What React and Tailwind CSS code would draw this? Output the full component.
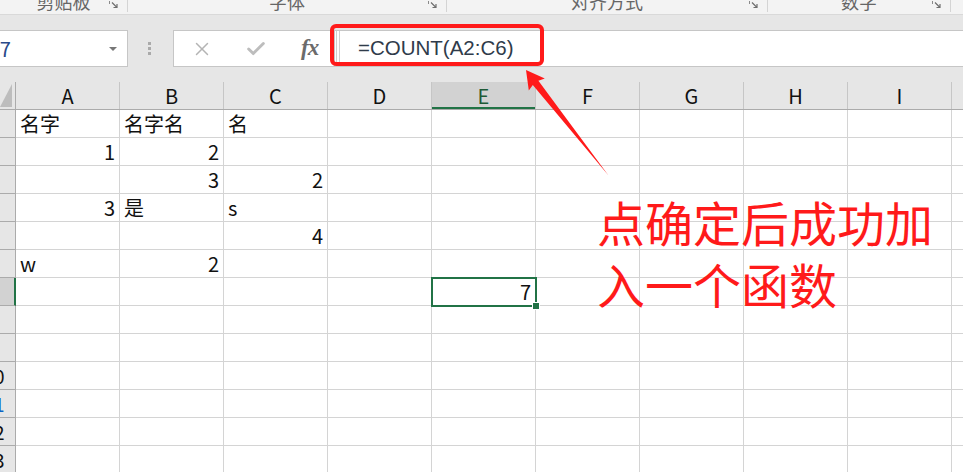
import { X, Check } from 'lucide-react';

const cols = ['A', 'B', 'C', 'D', 'E', 'F', 'G', 'H', 'I', 'J'];

// row -> column -> [value, isNumber]
const cells = {
  1: { A: ['名字'], B: ['名字名'], C: ['名'] },
  2: { A: ['1', true], B: ['2', true] },
  3: { B: ['3', true], C: ['2', true] },
  4: { A: ['3', true], B: ['是'], C: ['s'] },
  5: { C: ['4', true] },
  6: { A: ['w'], B: ['2', true] },
  7: { E: ['7', true] },
};

const groups = [
  { label: '剪贴板', w: 'w-[128px]' },
  { label: '字体', w: 'w-[319px]' },
  { label: '对齐方式', w: 'w-[321px]' },
  { label: '数字', w: 'w-[183px]' },
];

const Launcher = () => (
  <svg width="9" height="8" viewBox="0 0 9 8" className="absolute right-[9px] top-[1px]">
    <path d="M0.5 0 V3" stroke="#8a8a8a" strokeWidth="1" />
    <path d="M3 1.5 L7.5 6 M4.5 6.5 H8 V3" stroke="#6f6f6f" strokeWidth="1.2" fill="none" />
  </svg>
);

const Cell = ({ row, col }) => {
  const c = cells[row]?.[col];
  const selected = row === 7 && col === 'E';
  return (
    <div className="relative w-[104px] shrink-0 border-r border-b border-[#d4d4d4] flex items-end px-[4px] pb-[1px]">
      {c && (
        <span className={`w-full leading-[24px] ${c[1] ? 'text-right' : 'text-left'}`}>{c[0]}</span>
      )}
      {selected && (
        <>
          <div className="absolute z-10 -left-px -top-px w-[106px] h-[30px] border-2 border-[#217346]" />
          <div className="absolute z-20 -right-[5px] -bottom-[5px] w-[8px] h-[8px] bg-[#217346] border border-white" />
        </>
      )}
    </div>
  );
};

export default function App() {
  const rows = Array.from({ length: 13 }, (_, i) => i + 1);

  return (
    <div className="relative w-[963px] h-[472px] overflow-hidden bg-white text-[#111] font-['Noto_Sans_CJK_SC','Noto_Sans',sans-serif]">
      {/* Ribbon group labels */}
      <div className="flex h-[15px] bg-[#f3f3f3] border-b border-[#d9d9d9] overflow-hidden">
        {groups.map((g) => (
          <div key={g.label} className={`relative ${g.w} shrink-0 border-r border-[#d4d4d4] mb-[2px]`}>
            <div className="text-center text-[18px] leading-[18px] -mt-[8px] text-[#666]">{g.label}</div>
            <Launcher />
          </div>
        ))}
        <div className="flex-1" />
      </div>

      <div className="h-[15px] bg-[#e6e6e6]" />

      {/* Formula bar */}
      <div className="flex h-[37px] bg-[#e6e6e6]">
        <div className="w-[129px] -ml-px shrink-0 bg-white border border-[#c6c6c6] flex items-center justify-between pr-[10px]">
          <span className="-ml-[12px] text-[20px] text-[#2a4a8a]">E7</span>
          <span className="w-0 h-0 border-l-[4px] border-r-[4px] border-t-[4px] border-l-transparent border-r-transparent border-t-[#777]" />
        </div>
        <div className="w-[45px] shrink-0 flex justify-center items-center">
          <div className="flex flex-col gap-[2px] -ml-[2px]">
            <span className="w-[3px] h-[3px] bg-[#aaa]" />
            <span className="w-[3px] h-[3px] bg-[#aaa]" />
            <span className="w-[3px] h-[3px] bg-[#aaa]" />
          </div>
        </div>
        <div className="w-[162px] shrink-0 bg-white border border-[#c6c6c6] flex items-center">
          <X className="ml-[17px] w-[22px] h-[22px] text-[#b4b4b4]" strokeWidth={1.6} />
          <Check className="ml-[32px] w-[22px] h-[22px] text-[#bdbdbd]" strokeWidth={3.2} />
          <span className="ml-[34px] font-['Liberation_Serif',serif] italic font-bold text-[23px] text-[#6b6b6b] tracking-[-1px]">fx</span>
        </div>
        <div className="flex-1 bg-white border-y border-[#c6c6c6] flex items-center">
          <span className="ml-[1px] h-full w-[4px] border-x border-[#d0d0d0]" />
          <span className="ml-[18px] text-[20.5px] text-[#2f3b4a] font-['Liberation_Sans',Arial,sans-serif]">=COUNT(A2:C6)</span>
        </div>
      </div>

      <div className="h-[15px] bg-[#e6e6e6]" />

      {/* Column headers */}
      <div className="flex h-[28px] bg-[#e6e6e6] border-b border-[#ababab]">
        <div className="relative w-[16px] shrink-0 border-r border-[#ababab]">
          <svg width="13" height="23" viewBox="0 0 13 23" className="absolute right-[2px] bottom-[2px]">
            <polygon points="12,0 12,23 0,23" fill="#bdbdbd" />
          </svg>
        </div>
        {cols.map((c) => (
          <div
            key={c}
            className={`w-[104px] shrink-0 flex items-center justify-center text-[20px] border-r ${
              c === 'E'
                ? 'bg-[#d2d2d2] text-[#1e5a36] border-[#c6c6c6] shadow-[inset_0_-2px_0_#217346]'
                : 'border-[#c6c6c6] text-[#111]'
            }`}
          >
            {c}
          </div>
        ))}
      </div>

      {/* Rows */}
      {rows.map((r) => (
        <div key={r} className="flex h-[28px] text-[20px]">
          <div
            className={`w-[16px] shrink-0 overflow-hidden border-b border-b-[#ababab] ${
              r === 7 ? 'bg-[#d2d2d2] border-r-2 border-r-[#217346]' : 'bg-[#e6e6e6] border-r border-r-[#ababab]'
            }`}
          >
            <div
              className={`w-[42px] -ml-[27px] text-center leading-[27px] text-[19px] ${r === 11 ? 'text-[#0b63c5]' : 'text-[#111]'}`}
            >
              {r}
            </div>
          </div>
          {cols.map((c) => (
            <Cell key={c} row={r} col={c} />
          ))}
        </div>
      ))}

      {/* Annotation: red frame around the formula */}
      <div className="absolute left-[330px] top-[24px] w-[214px] h-[42px] border-4 border-[#ff1a1a] rounded-[6px]" />

      {/* Annotation: arrow */}
      <svg className="absolute left-0 top-0 pointer-events-none" width="963" height="472" viewBox="0 0 963 472">
        <polygon
          points="526,70 544.8,78.4 538.4,80.7 608.5,175.5 532.8,84.9 528.8,90.4"
          fill="#ff1a1a"
        />
      </svg>

      {/* Annotation: caption */}
      <div className="absolute left-[597px] top-[190px] text-[48px] leading-[62px] text-[#ff1a1a] font-['Noto_Sans_CJK_SC',sans-serif]">
        <div>点确定后成功加</div>
        <div>入一个函数</div>
      </div>
    </div>
  );
}
